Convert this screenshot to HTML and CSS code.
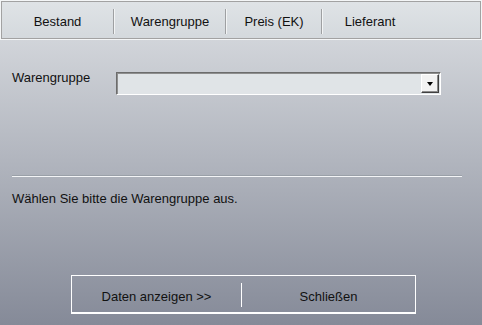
FILE: index.html
```html
<!DOCTYPE html>
<html lang="de">
<head>
<meta charset="utf-8">
<link rel="stylesheet" href="styles.css">
</head>
<body>
<div class="tabbar">
  <div class="tab tab-first">Bestand</div>
  <span class="sep"></span>
  <div class="tab tab-second">Warengruppe</div>
  <span class="sep"></span>
  <div class="tab tab-narrow">Preis (EK)</div>
  <span class="sep"></span>
  <div class="tab tab-narrow">Lieferant</div>
</div>
<div class="form-row">
  <label class="label">Warengruppe</label>
  <div class="combo">
    <div class="combo-btn"><span class="arrow"></span></div>
  </div>
</div>
<div class="rule"></div>
<div class="hint">Wählen Sie bitte die Warengruppe aus.</div>
<div class="buttons">
  <div class="btn btn-left">Daten anzeigen &gt;&gt;</div>
  <span class="btn-sep"></span>
  <div class="btn btn-right">Schließen</div>
</div>
</body>
</html>
```
FILE: styles.css
```css
html, body {
  margin: 0;
  padding: 0;
}
body {
  width: 482px;
  height: 325px;
  overflow: hidden;
  background: linear-gradient(to bottom, #dcdfe3 0px, #858a98 325px);
  font-family: "Liberation Sans", Arial, sans-serif;
  font-size: 13px;
  line-height: 15px;
  color: #111;
  display: flex;
  flex-direction: column;
}
.tabbar {
  margin: 1px;
  height: 36px;
  border: 1px solid #a2a2a2;
  box-shadow: 0 0 0 1px #f4f6f7;
  background: linear-gradient(to bottom, #dfe3e6, #d4d9dd);
  display: flex;
  align-items: center;
}
.tab {
  text-align: center;
  padding-top: 3px;
}
.tab-first { width: 111px; }
.tab-second { width: 110px; }
.tab-narrow { width: 94px; }
.sep {
  width: 1px;
  height: 25px;
  background: #9ea0a2;
  border-right: 1px solid #f2f4f5;
  margin-top: 2px;
}
.form-row {
  display: flex;
  align-items: flex-start;
  margin-top: 30px;
  padding-left: 12px;
}
.label {
  width: 104px;
}
.combo {
  margin-top: 2px;
  width: 325px;
  height: 23px;
  box-sizing: border-box;
  border-style: solid;
  border-width: 1px;
  border-color: #6c6c6c #ffffff #ffffff #6c6c6c;
  box-shadow: inset 1px 1px 0 #8e8e8e;
  background: #e0e4e7;
  display: flex;
  justify-content: flex-end;
  padding: 1px 1px 1px 0;
}
.combo-btn {
  width: 18px;
  height: 19px;
  box-sizing: border-box;
  background: #f2f2f2;
  border-style: solid;
  border-width: 1px;
  border-color: #ffffff #404040 #404040 #ffffff;
  box-shadow: inset -1px -1px 0 #8a8a8a;
  display: flex;
  align-items: center;
  justify-content: center;
}
.arrow {
  width: 0;
  height: 0;
  border-left: 3.5px solid transparent;
  border-right: 3.5px solid transparent;
  border-top: 4px solid #000;
  margin-top: 1px;
}
.rule {
  margin: 80px 20px 0 12px;
  height: 1px;
  background: #9aa0a8;
  border-bottom: 1px solid #f3f4f6;
}
.hint {
  margin-top: 14px;
  padding-left: 12px;
}
.buttons {
  margin-top: 69px;
  margin-left: 71px;
  width: 345px;
  height: 39px;
  box-sizing: border-box;
  border: 1px solid #ffffff;
  border-bottom-width: 2px;
  display: flex;
  align-items: center;
}
.btn {
  text-align: center;
  padding-top: 5px;
}
.btn-left { width: 169px; }
.btn-right { flex: 1; }
.btn-sep {
  width: 1px;
  height: 24px;
  margin-top: 2px;
  background: #ffffff;
}
```
